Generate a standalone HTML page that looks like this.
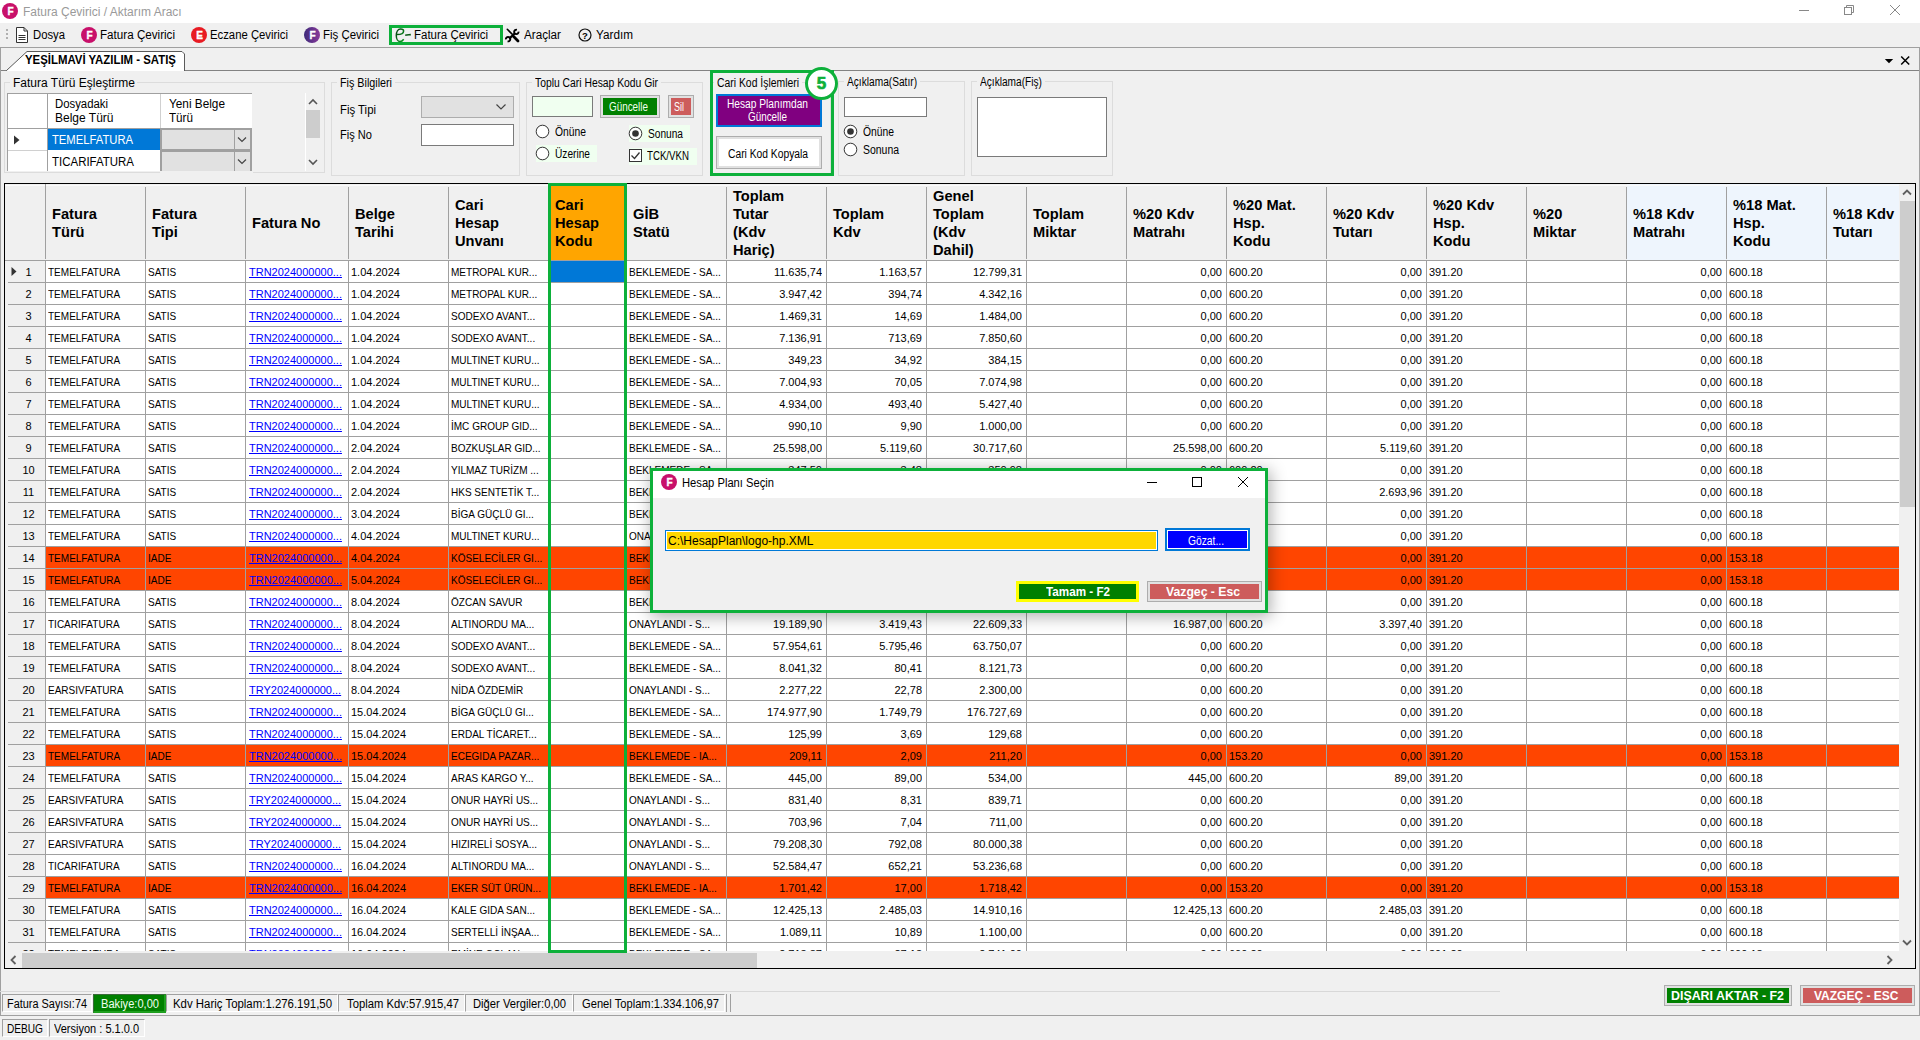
<!DOCTYPE html>
<html><head><meta charset="utf-8"><title>Fatura Çevirici</title>
<style>
*{box-sizing:border-box}
html,body{margin:0;padding:0;width:1920px;height:1040px;overflow:hidden;background:#f0f0f0;font-family:"Liberation Sans", sans-serif;font-size:12px;color:#000}
.a{position:absolute}
.t{position:absolute;white-space:nowrap;line-height:12px}
.ico{position:absolute;border-radius:50%;color:#fff;font-weight:bold;font-size:10px;text-align:center;line-height:17px;width:16px;height:16px;-webkit-text-stroke:0.35px #fff;padding-left:1px}
.grp{position:absolute;border:1px solid #dcdcdc}
.cell{position:absolute;white-space:nowrap;overflow:hidden;font-size:11px;line-height:21px;height:21px;padding-top:1px}
.hd{position:absolute;font-weight:bold;font-size:14.67px;line-height:18px;white-space:nowrap}
</style></head><body>
<div class="a" style="left:0;top:0;width:1920px;height:23px;background:#fff"></div>
<div class="ico" style="left:2px;top:3px;background:#c8106a;">F</div>
<div class="t" style="left:23px;top:6px;color:#9a9a9a;">Fatura Çevirici / Aktarım Aracı</div>
<svg class="a" style="left:1790px;top:0" width="130" height="23" viewBox="1790 0 130 23"><line x1="1799" y1="10.5" x2="1809" y2="10.5" stroke="#888" stroke-width="1"/><rect x="1844.5" y="7.5" width="7" height="7" fill="none" stroke="#888"/><path d="M1846.5 7.5V5.5H1853.5V12.5H1851.5" fill="none" stroke="#888"/><path d="M1890 5L1900 15M1900 5L1890 15" stroke="#888" stroke-width="1"/></svg>
<div class="a" style="left:0;top:23px;width:1920px;height:24px;background:#f0f0f0"></div>
<div class="a" style="left:6px;top:29px;width:2px;height:2px;background:#b0b0b0"></div>
<div class="a" style="left:6px;top:33px;width:2px;height:2px;background:#b0b0b0"></div>
<div class="a" style="left:6px;top:37px;width:2px;height:2px;background:#b0b0b0"></div>
<svg class="a" style="left:15px;top:26px" width="14" height="18" viewBox="0 0 14 18"><path d="M1.5 1.5H9L12.5 5V16.5H1.5Z" fill="#fff" stroke="#333" stroke-width="1"/><path d="M9 1.5V5H12.5" fill="none" stroke="#333"/><path d="M3.5 9.5H10.5M3.5 11.5H10.5M3.5 13.5H10.5" stroke="#333"/></svg>
<div class="t" style="left:33px;top:29px;transform:scaleX(0.941);transform-origin:0 0;">Dosya</div>
<div class="ico" style="left:81px;top:27px;background:#c8106a">F</div>
<div class="t" style="left:100px;top:29px;transform:scaleX(0.970);transform-origin:0 0;">Fatura Çevirici</div>
<div class="ico" style="left:191px;top:27px;background:#e81b23">E</div>
<div class="t" style="left:210px;top:29px;transform:scaleX(0.943);transform-origin:0 0;">Eczane Çevirici</div>
<div class="ico" style="left:304px;top:27px;background:linear-gradient(90deg,#3d2a7a,#8a3a9a)">F</div>
<div class="t" style="left:323px;top:29px;transform:scaleX(0.954);transform-origin:0 0;">Fiş Çevirici</div>
<div class="a" style="left:389px;top:25px;width:114px;height:20px;border:3px solid #0db03a"></div>
<svg class="a" style="left:390px;top:24px" width="26" height="22" viewBox="0 0 26 22"><defs><linearGradient id="eg" x1="0" y1="0" x2="1" y2="1"><stop offset="0" stop-color="#063a10"/><stop offset="1" stop-color="#0aa020"/></linearGradient></defs><path d="M7 10.6C10 10.6 13.6 9.6 13.6 7C13.6 5.2 12.2 5 10.6 5C8 5 6.3 8 6.3 11.5C6.3 15 8 17.5 10 17.5C11.5 17.5 12.8 16.6 13.7 15.3" fill="none" stroke="url(#eg)" stroke-width="1.5"/><path d="M15.2 11.2C17 10.8 19 10.8 20.8 10.6" fill="none" stroke="#0a5a14" stroke-width="1.6"/></svg>
<div class="t" style="left:414px;top:29px;transform:scaleX(0.957);transform-origin:0 0;">Fatura Çevirici</div>
<svg class="a" style="left:504px;top:27px" width="16" height="16" viewBox="0 0 16 16"><path d="M3.3 2.3L9 8" stroke="#000" stroke-width="1.6" stroke-linecap="round"/><path d="M9.6 9.6L14 14" stroke="#000" stroke-width="2.8" stroke-linecap="round"/><path d="M11 6.2L5.2 11.6" stroke="#000" stroke-width="2.2"/><path d="M14.5 4.6A2.2 2.2 0 1 1 12.9 2.8" fill="none" stroke="#000" stroke-width="1.9"/><path d="M1.9 12.4A2.2 2.2 0 1 1 3.6 14.3" fill="none" stroke="#000" stroke-width="1.9"/></svg>
<div class="t" style="left:524px;top:29px;transform:scaleX(0.973);transform-origin:0 0;">Araçlar</div>
<svg class="a" style="left:578px;top:28px" width="14" height="14" viewBox="0 0 14 14"><circle cx="7" cy="7" r="6" fill="none" stroke="#111" stroke-width="1.2"/><text x="7" y="10.5" font-size="9.5" font-weight="bold" text-anchor="middle" font-family="Liberation Sans">?</text></svg>
<div class="t" style="left:596px;top:29px;transform:scaleX(0.979);transform-origin:0 0;">Yardım</div>
<div class="a" style="left:0;top:47px;width:1920px;height:969px;border:1px solid #a0a0a0"></div>
<div class="a" style="left:1px;top:70px;width:1918px;height:1px;background:#828282"></div>
<svg class="a" style="left:0;top:48px" width="200" height="24" viewBox="0 48 200 24"><path d="M6.5 71V70.5L27 51.5H182L184.5 54V71" fill="#fff" stroke="#5a5a5a" stroke-width="1"/></svg>
<div class="t" style="left:25px;top:54px;font-weight:bold;transform:scaleX(0.950);transform-origin:0 0;">YEŞİLMAVİ YAZILIM - SATIŞ</div>
<svg class="a" style="left:1880px;top:52px" width="36" height="16" viewBox="0 0 36 16"><path d="M4.8 7H13.2L9 11.2Z" fill="#000"/><path d="M21.2 4.5L29.2 12.5M29.2 4.5L21.2 12.5" stroke="#000" stroke-width="1.5"/></svg>
<div class="grp" style="left:4px;top:82px;width:321px;height:91px"></div>
<div class="a" style="left:10px;top:81px;width:127px;height:3px;background:#f0f0f0"></div>
<div class="t" style="left:13px;top:77px;">Fatura Türü Eşleştirme</div>
<div class="a" style="left:7px;top:93px;width:245px;height:78px;background:#fff;border-left:1px solid #a0a0a0;border-top:1px solid #a0a0a0"></div>
<div class="a" style="left:47px;top:94px;width:1px;height:77px;background:#a0a0a0"></div>
<div class="a" style="left:160px;top:94px;width:1px;height:34px;background:#d0d0d0"></div>
<div class="a" style="left:8px;top:128px;width:244px;height:1px;background:#a0a0a0"></div>
<div class="a" style="left:8px;top:150px;width:39px;height:1px;background:#d0d0d0"></div>
<div class="t" style="left:55px;top:98px;transform:scaleX(0.946);transform-origin:0 0;">Dosyadaki</div>
<div class="t" style="left:55px;top:112px;">Belge Türü</div>
<div class="t" style="left:169px;top:98px;transform:scaleX(0.983);transform-origin:0 0;">Yeni Belge</div>
<div class="t" style="left:169px;top:112px;transform:scaleX(0.972);transform-origin:0 0;">Türü</div>
<svg class="a" style="left:13px;top:135px" width="8" height="10"><path d="M1 0.5L6.5 5L1 9.5Z" fill="#333"/></svg>
<div class="a" style="left:48px;top:129px;width:112px;height:21px;background:#0078d7"></div>
<div class="t" style="left:52px;top:134px;color:#fff;transform:scaleX(0.937);transform-origin:0 0;">TEMELFATURA</div>
<div class="t" style="left:52px;top:156px;transform:scaleX(0.956);transform-origin:0 0;">TICARIFATURA</div>
<div class="a" style="left:160px;top:128px;width:92px;height:23px;background:#e1e1e1;border:2px solid #a0a0a0"></div>
<div class="a" style="left:234px;top:130px;width:1px;height:19px;background:#a0a0a0"></div>
<svg class="a" style="left:236px;top:136px" width="12" height="8"><path d="M2 1.5L6 5.5L10 1.5" fill="none" stroke="#444" stroke-width="1.2"/></svg>
<div class="a" style="left:160px;top:150px;width:92px;height:23px;background:#e1e1e1;border:2px solid #a0a0a0"></div>
<div class="a" style="left:234px;top:152px;width:1px;height:19px;background:#a0a0a0"></div>
<svg class="a" style="left:236px;top:158px" width="12" height="8"><path d="M2 1.5L6 5.5L10 1.5" fill="none" stroke="#444" stroke-width="1.2"/></svg>
<div class="a" style="left:160px;top:171px;width:93px;height:2px;background:#f0f0f0"></div>
<div class="a" style="left:305px;top:93px;width:16px;height:78px;background:#f0f0f0;border-left:1px solid #fff"></div>
<svg class="a" style="left:308px;top:98px" width="10" height="8"><path d="M1 6L5 2L9 6" fill="none" stroke="#555" stroke-width="1.6"/></svg>
<div class="a" style="left:306px;top:110px;width:14px;height:28px;background:#cdcdcd"></div>
<svg class="a" style="left:308px;top:158px" width="10" height="8"><path d="M1 2L5 6L9 2" fill="none" stroke="#555" stroke-width="1.6"/></svg>
<div class="grp" style="left:331px;top:82px;width:189px;height:94px"></div>
<div class="a" style="left:337px;top:81px;width:58px;height:3px;background:#f0f0f0"></div>
<div class="t" style="left:340px;top:77px;transform:scaleX(0.896);transform-origin:0 0;">Fiş Bilgileri</div>
<div class="t" style="left:340px;top:104px;transform:scaleX(0.947);transform-origin:0 0;">Fiş Tipi</div>
<div class="t" style="left:340px;top:129px;transform:scaleX(0.923);transform-origin:0 0;">Fiş No</div>
<div class="a" style="left:421px;top:96px;width:93px;height:22px;background:#e1e1e1;border:1px solid #adadad"></div>
<svg class="a" style="left:495px;top:103px" width="12" height="8"><path d="M1.5 1.5L6 6L10.5 1.5" fill="none" stroke="#444" stroke-width="1.2"/></svg>
<div class="a" style="left:421px;top:124px;width:93px;height:22px;background:#fff;border:1px solid #7a7a7a"></div>
<div class="grp" style="left:526px;top:82px;width:177px;height:94px"></div>
<div class="a" style="left:532px;top:81px;width:129px;height:3px;background:#f0f0f0"></div>
<div class="t" style="left:535px;top:77px;transform:scaleX(0.862);transform-origin:0 0;">Toplu Cari Hesap Kodu Gir</div>
<div class="a" style="left:532px;top:96px;width:61px;height:21px;background:#f0fff0;border:1px solid #7a7a7a"></div>
<div class="a" style="left:600px;top:95px;width:60px;height:23px;background:#e1e1e1;border:1px solid #adadad"></div>
<div class="a" style="left:603px;top:98px;width:54px;height:17px;background:#008000"></div>
<div class="t" style="left:609px;top:101px;color:#f0fff0;transform:scaleX(0.823);transform-origin:0 0;">Güncelle</div>
<div class="a" style="left:668px;top:95px;width:26px;height:23px;background:#e1e1e1;border:1px solid #adadad"></div>
<div class="a" style="left:671px;top:98px;width:20px;height:17px;background:#cd5c5c"></div>
<div class="t" style="left:674px;top:101px;color:#fff;transform:scaleX(0.749);transform-origin:0 0;">Sil</div>
<div class="a" style="left:536px;top:145px;width:61px;height:17px;background:#f0fff0"></div>
<div class="a" style="left:629px;top:125px;width:61px;height:17px;background:#f0fff0"></div>
<div class="a" style="left:629px;top:148px;width:68px;height:17px;background:#f0fff0"></div>
<svg class="a" style="left:535px;top:124px" width="15" height="15" viewBox="0 0 15 15"><circle cx="7.5" cy="7.5" r="6.3" fill="#fff" stroke="#333" stroke-width="1"/></svg>
<div class="t" style="left:555px;top:126px;transform:scaleX(0.860);transform-origin:0 0;">Önüne</div>
<svg class="a" style="left:535px;top:146px" width="15" height="15" viewBox="0 0 15 15"><circle cx="7.5" cy="7.5" r="6.3" fill="#fff" stroke="#333" stroke-width="1"/></svg>
<div class="t" style="left:555px;top:148px;transform:scaleX(0.846);transform-origin:0 0;">Üzerine</div>
<svg class="a" style="left:628px;top:126px" width="15" height="15" viewBox="0 0 15 15"><circle cx="7.5" cy="7.5" r="6.3" fill="#fff" stroke="#333" stroke-width="1"/><circle cx="7.5" cy="7.5" r="3.3" fill="#333"/></svg>
<div class="t" style="left:648px;top:128px;transform:scaleX(0.846);transform-origin:0 0;">Sonuna</div>
<svg class="a" style="left:629px;top:149px" width="14" height="14"><rect x="0.5" y="0.5" width="12" height="12" fill="#fff" stroke="#333"/><path d="M2.5 6.5L5.5 9.5L10.5 3.5" fill="none" stroke="#333" stroke-width="1.3"/></svg>
<div class="t" style="left:647px;top:150px;transform:scaleX(0.807);transform-origin:0 0;">TCK/VKN</div>
<div class="grp" style="left:712px;top:82px;width:119px;height:92px"></div>
<div class="a" style="left:714px;top:81px;width:88px;height:3px;background:#f0f0f0"></div>
<div class="t" style="left:717px;top:77px;transform:scaleX(0.866);transform-origin:0 0;">Cari Kod İşlemleri</div>
<div class="a" style="left:716px;top:94px;width:106px;height:33px;border:2px solid #0078d7;background:#800080"></div>
<div class="t" style="left:727px;top:98px;color:#fff;transform:scaleX(0.849);transform-origin:0 0;">Hesap Planımdan</div>
<div class="t" style="left:748px;top:111px;color:#fff;transform:scaleX(0.823);transform-origin:0 0;">Güncelle</div>
<div class="a" style="left:716px;top:136px;width:106px;height:33px;border:1px solid #adadad;background:#fff;box-shadow:inset 0 0 0 2px #e1e1e1"></div>
<div class="t" style="left:728px;top:148px;transform:scaleX(0.857);transform-origin:0 0;">Cari Kod Kopyala</div>
<div class="a" style="left:710px;top:70px;width:124px;height:106px;border:3px solid #0db03a"></div>
<div class="a" style="left:805px;top:67px;width:33px;height:33px;border:3px solid #0db03a;border-radius:50%;background:#fff"></div>
<div class="t" style="left:805px;top:77px;width:33px;text-align:center;font-weight:bold;font-size:17px;line-height:14px;color:#0db03a;-webkit-text-stroke:0.7px #0db03a">5</div>
<div class="grp" style="left:838px;top:81px;width:127px;height:95px"></div>
<div class="a" style="left:844px;top:80px;width:76px;height:3px;background:#f0f0f0"></div>
<div class="t" style="left:847px;top:76px;transform:scaleX(0.847);transform-origin:0 0;">Açıklama(Satır)</div>
<div class="a" style="left:844px;top:97px;width:83px;height:20px;background:#fff;border:1px solid #7a7a7a"></div>
<svg class="a" style="left:843px;top:124px" width="15" height="15" viewBox="0 0 15 15"><circle cx="7.5" cy="7.5" r="6.3" fill="#fff" stroke="#333" stroke-width="1"/><circle cx="7.5" cy="7.5" r="3.3" fill="#333"/></svg>
<div class="t" style="left:863px;top:126px;transform:scaleX(0.860);transform-origin:0 0;">Önüne</div>
<svg class="a" style="left:843px;top:142px" width="15" height="15" viewBox="0 0 15 15"><circle cx="7.5" cy="7.5" r="6.3" fill="#fff" stroke="#333" stroke-width="1"/></svg>
<div class="t" style="left:863px;top:144px;transform:scaleX(0.870);transform-origin:0 0;">Sonuna</div>
<div class="grp" style="left:971px;top:81px;width:142px;height:95px"></div>
<div class="a" style="left:977px;top:80px;width:68px;height:3px;background:#f0f0f0"></div>
<div class="t" style="left:980px;top:76px;transform:scaleX(0.845);transform-origin:0 0;">Açıklama(Fiş)</div>
<div class="a" style="left:977px;top:97px;width:130px;height:60px;background:#fff;border:1px solid #7a7a7a"></div>
<div class="a" style="left:4px;top:183px;width:1912px;height:786px;border:1px solid #000;background:#f0f0f0"></div>
<div class="a" style="left:5px;top:184px;width:1894px;height:767px;overflow:hidden">
<div class="a" style="left:544px;top:0;width:77px;height:76px;background:#ffa500"></div>
<div class="a" style="left:1622px;top:0;width:99px;height:76px;background:#eef5fd"></div>
<div class="a" style="left:1722px;top:0;width:99px;height:76px;background:#eef5fd"></div>
<div class="a" style="left:1822px;top:0;width:99px;height:76px;background:#eef5fd"></div>
<div class="a" style="left:0;top:1px;width:1894px;height:1px;background:#fafafa"></div>
<div class="a" style="left:40px;top:0;width:1px;height:75px;background:#a0a0a0"></div>
<div class="a" style="left:140px;top:3px;width:1px;height:72px;background:#a0a0a0"></div>
<div class="a" style="left:240px;top:3px;width:1px;height:72px;background:#a0a0a0"></div>
<div class="a" style="left:343px;top:3px;width:1px;height:72px;background:#a0a0a0"></div>
<div class="a" style="left:443px;top:3px;width:1px;height:72px;background:#a0a0a0"></div>
<div class="a" style="left:543px;top:3px;width:1px;height:72px;background:#a0a0a0"></div>
<div class="a" style="left:621px;top:3px;width:1px;height:72px;background:#a0a0a0"></div>
<div class="a" style="left:721px;top:3px;width:1px;height:72px;background:#a0a0a0"></div>
<div class="a" style="left:821px;top:3px;width:1px;height:72px;background:#a0a0a0"></div>
<div class="a" style="left:921px;top:3px;width:1px;height:72px;background:#a0a0a0"></div>
<div class="a" style="left:1021px;top:3px;width:1px;height:72px;background:#a0a0a0"></div>
<div class="a" style="left:1121px;top:3px;width:1px;height:72px;background:#a0a0a0"></div>
<div class="a" style="left:1221px;top:3px;width:1px;height:72px;background:#a0a0a0"></div>
<div class="a" style="left:1321px;top:3px;width:1px;height:72px;background:#a0a0a0"></div>
<div class="a" style="left:1421px;top:3px;width:1px;height:72px;background:#a0a0a0"></div>
<div class="a" style="left:1521px;top:3px;width:1px;height:72px;background:#a0a0a0"></div>
<div class="a" style="left:1621px;top:3px;width:1px;height:72px;background:#a0a0a0"></div>
<div class="a" style="left:1721px;top:3px;width:1px;height:72px;background:#a0a0a0"></div>
<div class="a" style="left:1821px;top:3px;width:1px;height:72px;background:#a0a0a0"></div>
<div class="hd" style="left:47px;top:21px">Fatura<br>Türü</div>
<div class="hd" style="left:147px;top:21px">Fatura<br>Tipi</div>
<div class="hd" style="left:247px;top:30px">Fatura No</div>
<div class="hd" style="left:350px;top:21px">Belge<br>Tarihi</div>
<div class="hd" style="left:450px;top:12px">Cari<br>Hesap<br>Unvanı</div>
<div class="hd" style="left:550px;top:12px">Cari<br>Hesap<br>Kodu</div>
<div class="hd" style="left:628px;top:21px">GİB<br>Statü</div>
<div class="hd" style="left:728px;top:3px">Toplam<br>Tutar<br>(Kdv<br>Hariç)</div>
<div class="hd" style="left:828px;top:21px">Toplam<br>Kdv</div>
<div class="hd" style="left:928px;top:3px">Genel<br>Toplam<br>(Kdv<br>Dahil)</div>
<div class="hd" style="left:1028px;top:21px">Toplam<br>Miktar</div>
<div class="hd" style="left:1128px;top:21px">%20 Kdv<br>Matrahı</div>
<div class="hd" style="left:1228px;top:12px">%20 Mat.<br>Hsp.<br>Kodu</div>
<div class="hd" style="left:1328px;top:21px">%20 Kdv<br>Tutarı</div>
<div class="hd" style="left:1428px;top:12px">%20 Kdv<br>Hsp.<br>Kodu</div>
<div class="hd" style="left:1528px;top:21px">%20<br>Miktar</div>
<div class="hd" style="left:1628px;top:21px">%18 Kdv<br>Matrahı</div>
<div class="hd" style="left:1728px;top:12px">%18 Mat.<br>Hsp.<br>Kodu</div>
<div class="hd" style="left:1828px;top:21px">%18 Kdv<br>Tutarı</div>
<div class="a" style="left:0;top:76px;width:1894px;height:1px;background:#a0a0a0"></div>
<div class="a" style="left:3px;top:98px;width:37px;height:1px;background:#a0a0a0"></div>
<svg class="a" style="left:6px;top:82px" width="6" height="11"><path d="M0.5 1L5.5 5.5L0.5 10Z" fill="#333"/></svg>
<div class="cell" style="left:7px;top:77px;width:33px;text-align:center">1</div>
<div class="a" style="left:41px;top:77px;width:1853px;height:21px;background:#fff"></div>
<div class="a" style="left:544px;top:77px;width:77px;height:21px;background:#0078d7"></div>
<div class="a" style="left:41px;top:98px;width:1853px;height:1px;background:#a0a0a0"></div>
<div class="cell" style="left:43px;top:77px;width:105px;transform:scaleX(0.91);transform-origin:0 0;">TEMELFATURA</div>
<div class="cell" style="left:143px;top:77px;width:105px;transform:scaleX(0.91);transform-origin:0 0;">SATIS</div>
<div class="cell" style="left:244px;top:77px;width:99px;color:#0000ff;text-decoration:underline;">TRN2024000000...</div>
<div class="cell" style="left:346px;top:77px;width:96px;">1.04.2024</div>
<div class="cell" style="left:446px;top:77px;width:105px;transform:scaleX(0.91);transform-origin:0 0;">METROPAL KUR...</div>
<div class="cell" style="left:624px;top:77px;width:105px;transform:scaleX(0.91);transform-origin:0 0;">BEKLEMEDE - SA...</div>
<div class="cell" style="left:722px;top:77px;width:95px;text-align:right;">11.635,74</div>
<div class="cell" style="left:822px;top:77px;width:95px;text-align:right;">1.163,57</div>
<div class="cell" style="left:922px;top:77px;width:95px;text-align:right;">12.799,31</div>
<div class="cell" style="left:1122px;top:77px;width:95px;text-align:right;">0,00</div>
<div class="cell" style="left:1224px;top:77px;width:96px;">600.20</div>
<div class="cell" style="left:1322px;top:77px;width:95px;text-align:right;">0,00</div>
<div class="cell" style="left:1424px;top:77px;width:96px;">391.20</div>
<div class="cell" style="left:1622px;top:77px;width:95px;text-align:right;">0,00</div>
<div class="cell" style="left:1724px;top:77px;width:96px;">600.18</div>
<div class="a" style="left:3px;top:120px;width:37px;height:1px;background:#a0a0a0"></div>
<div class="cell" style="left:7px;top:99px;width:33px;text-align:center">2</div>
<div class="a" style="left:41px;top:99px;width:1853px;height:21px;background:#fff"></div>
<div class="a" style="left:41px;top:120px;width:1853px;height:1px;background:#a0a0a0"></div>
<div class="cell" style="left:43px;top:99px;width:105px;transform:scaleX(0.91);transform-origin:0 0;">TEMELFATURA</div>
<div class="cell" style="left:143px;top:99px;width:105px;transform:scaleX(0.91);transform-origin:0 0;">SATIS</div>
<div class="cell" style="left:244px;top:99px;width:99px;color:#0000ff;text-decoration:underline;">TRN2024000000...</div>
<div class="cell" style="left:346px;top:99px;width:96px;">1.04.2024</div>
<div class="cell" style="left:446px;top:99px;width:105px;transform:scaleX(0.91);transform-origin:0 0;">METROPAL KUR...</div>
<div class="cell" style="left:624px;top:99px;width:105px;transform:scaleX(0.91);transform-origin:0 0;">BEKLEMEDE - SA...</div>
<div class="cell" style="left:722px;top:99px;width:95px;text-align:right;">3.947,42</div>
<div class="cell" style="left:822px;top:99px;width:95px;text-align:right;">394,74</div>
<div class="cell" style="left:922px;top:99px;width:95px;text-align:right;">4.342,16</div>
<div class="cell" style="left:1122px;top:99px;width:95px;text-align:right;">0,00</div>
<div class="cell" style="left:1224px;top:99px;width:96px;">600.20</div>
<div class="cell" style="left:1322px;top:99px;width:95px;text-align:right;">0,00</div>
<div class="cell" style="left:1424px;top:99px;width:96px;">391.20</div>
<div class="cell" style="left:1622px;top:99px;width:95px;text-align:right;">0,00</div>
<div class="cell" style="left:1724px;top:99px;width:96px;">600.18</div>
<div class="a" style="left:3px;top:142px;width:37px;height:1px;background:#a0a0a0"></div>
<div class="cell" style="left:7px;top:121px;width:33px;text-align:center">3</div>
<div class="a" style="left:41px;top:121px;width:1853px;height:21px;background:#fff"></div>
<div class="a" style="left:41px;top:142px;width:1853px;height:1px;background:#a0a0a0"></div>
<div class="cell" style="left:43px;top:121px;width:105px;transform:scaleX(0.91);transform-origin:0 0;">TEMELFATURA</div>
<div class="cell" style="left:143px;top:121px;width:105px;transform:scaleX(0.91);transform-origin:0 0;">SATIS</div>
<div class="cell" style="left:244px;top:121px;width:99px;color:#0000ff;text-decoration:underline;">TRN2024000000...</div>
<div class="cell" style="left:346px;top:121px;width:96px;">1.04.2024</div>
<div class="cell" style="left:446px;top:121px;width:105px;transform:scaleX(0.91);transform-origin:0 0;">SODEXO AVANT...</div>
<div class="cell" style="left:624px;top:121px;width:105px;transform:scaleX(0.91);transform-origin:0 0;">BEKLEMEDE - SA...</div>
<div class="cell" style="left:722px;top:121px;width:95px;text-align:right;">1.469,31</div>
<div class="cell" style="left:822px;top:121px;width:95px;text-align:right;">14,69</div>
<div class="cell" style="left:922px;top:121px;width:95px;text-align:right;">1.484,00</div>
<div class="cell" style="left:1122px;top:121px;width:95px;text-align:right;">0,00</div>
<div class="cell" style="left:1224px;top:121px;width:96px;">600.20</div>
<div class="cell" style="left:1322px;top:121px;width:95px;text-align:right;">0,00</div>
<div class="cell" style="left:1424px;top:121px;width:96px;">391.20</div>
<div class="cell" style="left:1622px;top:121px;width:95px;text-align:right;">0,00</div>
<div class="cell" style="left:1724px;top:121px;width:96px;">600.18</div>
<div class="a" style="left:3px;top:164px;width:37px;height:1px;background:#a0a0a0"></div>
<div class="cell" style="left:7px;top:143px;width:33px;text-align:center">4</div>
<div class="a" style="left:41px;top:143px;width:1853px;height:21px;background:#fff"></div>
<div class="a" style="left:41px;top:164px;width:1853px;height:1px;background:#a0a0a0"></div>
<div class="cell" style="left:43px;top:143px;width:105px;transform:scaleX(0.91);transform-origin:0 0;">TEMELFATURA</div>
<div class="cell" style="left:143px;top:143px;width:105px;transform:scaleX(0.91);transform-origin:0 0;">SATIS</div>
<div class="cell" style="left:244px;top:143px;width:99px;color:#0000ff;text-decoration:underline;">TRN2024000000...</div>
<div class="cell" style="left:346px;top:143px;width:96px;">1.04.2024</div>
<div class="cell" style="left:446px;top:143px;width:105px;transform:scaleX(0.91);transform-origin:0 0;">SODEXO AVANT...</div>
<div class="cell" style="left:624px;top:143px;width:105px;transform:scaleX(0.91);transform-origin:0 0;">BEKLEMEDE - SA...</div>
<div class="cell" style="left:722px;top:143px;width:95px;text-align:right;">7.136,91</div>
<div class="cell" style="left:822px;top:143px;width:95px;text-align:right;">713,69</div>
<div class="cell" style="left:922px;top:143px;width:95px;text-align:right;">7.850,60</div>
<div class="cell" style="left:1122px;top:143px;width:95px;text-align:right;">0,00</div>
<div class="cell" style="left:1224px;top:143px;width:96px;">600.20</div>
<div class="cell" style="left:1322px;top:143px;width:95px;text-align:right;">0,00</div>
<div class="cell" style="left:1424px;top:143px;width:96px;">391.20</div>
<div class="cell" style="left:1622px;top:143px;width:95px;text-align:right;">0,00</div>
<div class="cell" style="left:1724px;top:143px;width:96px;">600.18</div>
<div class="a" style="left:3px;top:186px;width:37px;height:1px;background:#a0a0a0"></div>
<div class="cell" style="left:7px;top:165px;width:33px;text-align:center">5</div>
<div class="a" style="left:41px;top:165px;width:1853px;height:21px;background:#fff"></div>
<div class="a" style="left:41px;top:186px;width:1853px;height:1px;background:#a0a0a0"></div>
<div class="cell" style="left:43px;top:165px;width:105px;transform:scaleX(0.91);transform-origin:0 0;">TEMELFATURA</div>
<div class="cell" style="left:143px;top:165px;width:105px;transform:scaleX(0.91);transform-origin:0 0;">SATIS</div>
<div class="cell" style="left:244px;top:165px;width:99px;color:#0000ff;text-decoration:underline;">TRN2024000000...</div>
<div class="cell" style="left:346px;top:165px;width:96px;">1.04.2024</div>
<div class="cell" style="left:446px;top:165px;width:105px;transform:scaleX(0.91);transform-origin:0 0;">MULTINET KURU...</div>
<div class="cell" style="left:624px;top:165px;width:105px;transform:scaleX(0.91);transform-origin:0 0;">BEKLEMEDE - SA...</div>
<div class="cell" style="left:722px;top:165px;width:95px;text-align:right;">349,23</div>
<div class="cell" style="left:822px;top:165px;width:95px;text-align:right;">34,92</div>
<div class="cell" style="left:922px;top:165px;width:95px;text-align:right;">384,15</div>
<div class="cell" style="left:1122px;top:165px;width:95px;text-align:right;">0,00</div>
<div class="cell" style="left:1224px;top:165px;width:96px;">600.20</div>
<div class="cell" style="left:1322px;top:165px;width:95px;text-align:right;">0,00</div>
<div class="cell" style="left:1424px;top:165px;width:96px;">391.20</div>
<div class="cell" style="left:1622px;top:165px;width:95px;text-align:right;">0,00</div>
<div class="cell" style="left:1724px;top:165px;width:96px;">600.18</div>
<div class="a" style="left:3px;top:208px;width:37px;height:1px;background:#a0a0a0"></div>
<div class="cell" style="left:7px;top:187px;width:33px;text-align:center">6</div>
<div class="a" style="left:41px;top:187px;width:1853px;height:21px;background:#fff"></div>
<div class="a" style="left:41px;top:208px;width:1853px;height:1px;background:#a0a0a0"></div>
<div class="cell" style="left:43px;top:187px;width:105px;transform:scaleX(0.91);transform-origin:0 0;">TEMELFATURA</div>
<div class="cell" style="left:143px;top:187px;width:105px;transform:scaleX(0.91);transform-origin:0 0;">SATIS</div>
<div class="cell" style="left:244px;top:187px;width:99px;color:#0000ff;text-decoration:underline;">TRN2024000000...</div>
<div class="cell" style="left:346px;top:187px;width:96px;">1.04.2024</div>
<div class="cell" style="left:446px;top:187px;width:105px;transform:scaleX(0.91);transform-origin:0 0;">MULTINET KURU...</div>
<div class="cell" style="left:624px;top:187px;width:105px;transform:scaleX(0.91);transform-origin:0 0;">BEKLEMEDE - SA...</div>
<div class="cell" style="left:722px;top:187px;width:95px;text-align:right;">7.004,93</div>
<div class="cell" style="left:822px;top:187px;width:95px;text-align:right;">70,05</div>
<div class="cell" style="left:922px;top:187px;width:95px;text-align:right;">7.074,98</div>
<div class="cell" style="left:1122px;top:187px;width:95px;text-align:right;">0,00</div>
<div class="cell" style="left:1224px;top:187px;width:96px;">600.20</div>
<div class="cell" style="left:1322px;top:187px;width:95px;text-align:right;">0,00</div>
<div class="cell" style="left:1424px;top:187px;width:96px;">391.20</div>
<div class="cell" style="left:1622px;top:187px;width:95px;text-align:right;">0,00</div>
<div class="cell" style="left:1724px;top:187px;width:96px;">600.18</div>
<div class="a" style="left:3px;top:230px;width:37px;height:1px;background:#a0a0a0"></div>
<div class="cell" style="left:7px;top:209px;width:33px;text-align:center">7</div>
<div class="a" style="left:41px;top:209px;width:1853px;height:21px;background:#fff"></div>
<div class="a" style="left:41px;top:230px;width:1853px;height:1px;background:#a0a0a0"></div>
<div class="cell" style="left:43px;top:209px;width:105px;transform:scaleX(0.91);transform-origin:0 0;">TEMELFATURA</div>
<div class="cell" style="left:143px;top:209px;width:105px;transform:scaleX(0.91);transform-origin:0 0;">SATIS</div>
<div class="cell" style="left:244px;top:209px;width:99px;color:#0000ff;text-decoration:underline;">TRN2024000000...</div>
<div class="cell" style="left:346px;top:209px;width:96px;">1.04.2024</div>
<div class="cell" style="left:446px;top:209px;width:105px;transform:scaleX(0.91);transform-origin:0 0;">MULTINET KURU...</div>
<div class="cell" style="left:624px;top:209px;width:105px;transform:scaleX(0.91);transform-origin:0 0;">BEKLEMEDE - SA...</div>
<div class="cell" style="left:722px;top:209px;width:95px;text-align:right;">4.934,00</div>
<div class="cell" style="left:822px;top:209px;width:95px;text-align:right;">493,40</div>
<div class="cell" style="left:922px;top:209px;width:95px;text-align:right;">5.427,40</div>
<div class="cell" style="left:1122px;top:209px;width:95px;text-align:right;">0,00</div>
<div class="cell" style="left:1224px;top:209px;width:96px;">600.20</div>
<div class="cell" style="left:1322px;top:209px;width:95px;text-align:right;">0,00</div>
<div class="cell" style="left:1424px;top:209px;width:96px;">391.20</div>
<div class="cell" style="left:1622px;top:209px;width:95px;text-align:right;">0,00</div>
<div class="cell" style="left:1724px;top:209px;width:96px;">600.18</div>
<div class="a" style="left:3px;top:252px;width:37px;height:1px;background:#a0a0a0"></div>
<div class="cell" style="left:7px;top:231px;width:33px;text-align:center">8</div>
<div class="a" style="left:41px;top:231px;width:1853px;height:21px;background:#fff"></div>
<div class="a" style="left:41px;top:252px;width:1853px;height:1px;background:#a0a0a0"></div>
<div class="cell" style="left:43px;top:231px;width:105px;transform:scaleX(0.91);transform-origin:0 0;">TEMELFATURA</div>
<div class="cell" style="left:143px;top:231px;width:105px;transform:scaleX(0.91);transform-origin:0 0;">SATIS</div>
<div class="cell" style="left:244px;top:231px;width:99px;color:#0000ff;text-decoration:underline;">TRN2024000000...</div>
<div class="cell" style="left:346px;top:231px;width:96px;">1.04.2024</div>
<div class="cell" style="left:446px;top:231px;width:105px;transform:scaleX(0.91);transform-origin:0 0;">İMC GROUP GID...</div>
<div class="cell" style="left:624px;top:231px;width:105px;transform:scaleX(0.91);transform-origin:0 0;">BEKLEMEDE - SA...</div>
<div class="cell" style="left:722px;top:231px;width:95px;text-align:right;">990,10</div>
<div class="cell" style="left:822px;top:231px;width:95px;text-align:right;">9,90</div>
<div class="cell" style="left:922px;top:231px;width:95px;text-align:right;">1.000,00</div>
<div class="cell" style="left:1122px;top:231px;width:95px;text-align:right;">0,00</div>
<div class="cell" style="left:1224px;top:231px;width:96px;">600.20</div>
<div class="cell" style="left:1322px;top:231px;width:95px;text-align:right;">0,00</div>
<div class="cell" style="left:1424px;top:231px;width:96px;">391.20</div>
<div class="cell" style="left:1622px;top:231px;width:95px;text-align:right;">0,00</div>
<div class="cell" style="left:1724px;top:231px;width:96px;">600.18</div>
<div class="a" style="left:3px;top:274px;width:37px;height:1px;background:#a0a0a0"></div>
<div class="cell" style="left:7px;top:253px;width:33px;text-align:center">9</div>
<div class="a" style="left:41px;top:253px;width:1853px;height:21px;background:#fff"></div>
<div class="a" style="left:41px;top:274px;width:1853px;height:1px;background:#a0a0a0"></div>
<div class="cell" style="left:43px;top:253px;width:105px;transform:scaleX(0.91);transform-origin:0 0;">TEMELFATURA</div>
<div class="cell" style="left:143px;top:253px;width:105px;transform:scaleX(0.91);transform-origin:0 0;">SATIS</div>
<div class="cell" style="left:244px;top:253px;width:99px;color:#0000ff;text-decoration:underline;">TRN2024000000...</div>
<div class="cell" style="left:346px;top:253px;width:96px;">2.04.2024</div>
<div class="cell" style="left:446px;top:253px;width:105px;transform:scaleX(0.91);transform-origin:0 0;">BOZKUŞLAR GID...</div>
<div class="cell" style="left:624px;top:253px;width:105px;transform:scaleX(0.91);transform-origin:0 0;">BEKLEMEDE - SA...</div>
<div class="cell" style="left:722px;top:253px;width:95px;text-align:right;">25.598,00</div>
<div class="cell" style="left:822px;top:253px;width:95px;text-align:right;">5.119,60</div>
<div class="cell" style="left:922px;top:253px;width:95px;text-align:right;">30.717,60</div>
<div class="cell" style="left:1122px;top:253px;width:95px;text-align:right;">25.598,00</div>
<div class="cell" style="left:1224px;top:253px;width:96px;">600.20</div>
<div class="cell" style="left:1322px;top:253px;width:95px;text-align:right;">5.119,60</div>
<div class="cell" style="left:1424px;top:253px;width:96px;">391.20</div>
<div class="cell" style="left:1622px;top:253px;width:95px;text-align:right;">0,00</div>
<div class="cell" style="left:1724px;top:253px;width:96px;">600.18</div>
<div class="a" style="left:3px;top:296px;width:37px;height:1px;background:#a0a0a0"></div>
<div class="cell" style="left:7px;top:275px;width:33px;text-align:center">10</div>
<div class="a" style="left:41px;top:275px;width:1853px;height:21px;background:#fff"></div>
<div class="a" style="left:41px;top:296px;width:1853px;height:1px;background:#a0a0a0"></div>
<div class="cell" style="left:43px;top:275px;width:105px;transform:scaleX(0.91);transform-origin:0 0;">TEMELFATURA</div>
<div class="cell" style="left:143px;top:275px;width:105px;transform:scaleX(0.91);transform-origin:0 0;">SATIS</div>
<div class="cell" style="left:244px;top:275px;width:99px;color:#0000ff;text-decoration:underline;">TRN2024000000...</div>
<div class="cell" style="left:346px;top:275px;width:96px;">2.04.2024</div>
<div class="cell" style="left:446px;top:275px;width:105px;transform:scaleX(0.91);transform-origin:0 0;">YILMAZ TURİZM ...</div>
<div class="cell" style="left:624px;top:275px;width:105px;transform:scaleX(0.91);transform-origin:0 0;">BEKLEMEDE - SA...</div>
<div class="cell" style="left:722px;top:275px;width:95px;text-align:right;">347,50</div>
<div class="cell" style="left:822px;top:275px;width:95px;text-align:right;">3,48</div>
<div class="cell" style="left:922px;top:275px;width:95px;text-align:right;">350,98</div>
<div class="cell" style="left:1122px;top:275px;width:95px;text-align:right;">0,00</div>
<div class="cell" style="left:1224px;top:275px;width:96px;">600.20</div>
<div class="cell" style="left:1322px;top:275px;width:95px;text-align:right;">0,00</div>
<div class="cell" style="left:1424px;top:275px;width:96px;">391.20</div>
<div class="cell" style="left:1622px;top:275px;width:95px;text-align:right;">0,00</div>
<div class="cell" style="left:1724px;top:275px;width:96px;">600.18</div>
<div class="a" style="left:3px;top:318px;width:37px;height:1px;background:#a0a0a0"></div>
<div class="cell" style="left:7px;top:297px;width:33px;text-align:center">11</div>
<div class="a" style="left:41px;top:297px;width:1853px;height:21px;background:#fff"></div>
<div class="a" style="left:41px;top:318px;width:1853px;height:1px;background:#a0a0a0"></div>
<div class="cell" style="left:43px;top:297px;width:105px;transform:scaleX(0.91);transform-origin:0 0;">TEMELFATURA</div>
<div class="cell" style="left:143px;top:297px;width:105px;transform:scaleX(0.91);transform-origin:0 0;">SATIS</div>
<div class="cell" style="left:244px;top:297px;width:99px;color:#0000ff;text-decoration:underline;">TRN2024000000...</div>
<div class="cell" style="left:346px;top:297px;width:96px;">2.04.2024</div>
<div class="cell" style="left:446px;top:297px;width:105px;transform:scaleX(0.91);transform-origin:0 0;">HKS SENTETİK T...</div>
<div class="cell" style="left:624px;top:297px;width:105px;transform:scaleX(0.91);transform-origin:0 0;">BEKLEMEDE - SA...</div>
<div class="cell" style="left:722px;top:297px;width:95px;text-align:right;">13.469,80</div>
<div class="cell" style="left:822px;top:297px;width:95px;text-align:right;">2.693,96</div>
<div class="cell" style="left:922px;top:297px;width:95px;text-align:right;">16.163,76</div>
<div class="cell" style="left:1122px;top:297px;width:95px;text-align:right;">13.469,80</div>
<div class="cell" style="left:1224px;top:297px;width:96px;">600.20</div>
<div class="cell" style="left:1322px;top:297px;width:95px;text-align:right;">2.693,96</div>
<div class="cell" style="left:1424px;top:297px;width:96px;">391.20</div>
<div class="cell" style="left:1622px;top:297px;width:95px;text-align:right;">0,00</div>
<div class="cell" style="left:1724px;top:297px;width:96px;">600.18</div>
<div class="a" style="left:3px;top:340px;width:37px;height:1px;background:#a0a0a0"></div>
<div class="cell" style="left:7px;top:319px;width:33px;text-align:center">12</div>
<div class="a" style="left:41px;top:319px;width:1853px;height:21px;background:#fff"></div>
<div class="a" style="left:41px;top:340px;width:1853px;height:1px;background:#a0a0a0"></div>
<div class="cell" style="left:43px;top:319px;width:105px;transform:scaleX(0.91);transform-origin:0 0;">TEMELFATURA</div>
<div class="cell" style="left:143px;top:319px;width:105px;transform:scaleX(0.91);transform-origin:0 0;">SATIS</div>
<div class="cell" style="left:244px;top:319px;width:99px;color:#0000ff;text-decoration:underline;">TRN2024000000...</div>
<div class="cell" style="left:346px;top:319px;width:96px;">3.04.2024</div>
<div class="cell" style="left:446px;top:319px;width:105px;transform:scaleX(0.91);transform-origin:0 0;">BİGA GÜÇLÜ GI...</div>
<div class="cell" style="left:624px;top:319px;width:105px;transform:scaleX(0.91);transform-origin:0 0;">BEKLEMEDE - SA...</div>
<div class="cell" style="left:722px;top:319px;width:95px;text-align:right;">1.000,00</div>
<div class="cell" style="left:822px;top:319px;width:95px;text-align:right;">10,00</div>
<div class="cell" style="left:922px;top:319px;width:95px;text-align:right;">1.010,00</div>
<div class="cell" style="left:1122px;top:319px;width:95px;text-align:right;">0,00</div>
<div class="cell" style="left:1224px;top:319px;width:96px;">600.20</div>
<div class="cell" style="left:1322px;top:319px;width:95px;text-align:right;">0,00</div>
<div class="cell" style="left:1424px;top:319px;width:96px;">391.20</div>
<div class="cell" style="left:1622px;top:319px;width:95px;text-align:right;">0,00</div>
<div class="cell" style="left:1724px;top:319px;width:96px;">600.18</div>
<div class="a" style="left:3px;top:362px;width:37px;height:1px;background:#a0a0a0"></div>
<div class="cell" style="left:7px;top:341px;width:33px;text-align:center">13</div>
<div class="a" style="left:41px;top:341px;width:1853px;height:21px;background:#fff"></div>
<div class="a" style="left:41px;top:362px;width:1853px;height:1px;background:#a0a0a0"></div>
<div class="cell" style="left:43px;top:341px;width:105px;transform:scaleX(0.91);transform-origin:0 0;">TEMELFATURA</div>
<div class="cell" style="left:143px;top:341px;width:105px;transform:scaleX(0.91);transform-origin:0 0;">SATIS</div>
<div class="cell" style="left:244px;top:341px;width:99px;color:#0000ff;text-decoration:underline;">TRN2024000000...</div>
<div class="cell" style="left:346px;top:341px;width:96px;">4.04.2024</div>
<div class="cell" style="left:446px;top:341px;width:105px;transform:scaleX(0.91);transform-origin:0 0;">MULTINET KURU...</div>
<div class="cell" style="left:624px;top:341px;width:105px;transform:scaleX(0.91);transform-origin:0 0;">ONAYLANDI - S...</div>
<div class="cell" style="left:722px;top:341px;width:95px;text-align:right;">2.500,00</div>
<div class="cell" style="left:822px;top:341px;width:95px;text-align:right;">25,00</div>
<div class="cell" style="left:922px;top:341px;width:95px;text-align:right;">2.525,00</div>
<div class="cell" style="left:1122px;top:341px;width:95px;text-align:right;">0,00</div>
<div class="cell" style="left:1224px;top:341px;width:96px;">600.20</div>
<div class="cell" style="left:1322px;top:341px;width:95px;text-align:right;">0,00</div>
<div class="cell" style="left:1424px;top:341px;width:96px;">391.20</div>
<div class="cell" style="left:1622px;top:341px;width:95px;text-align:right;">0,00</div>
<div class="cell" style="left:1724px;top:341px;width:96px;">600.18</div>
<div class="a" style="left:3px;top:384px;width:37px;height:1px;background:#a0a0a0"></div>
<div class="cell" style="left:7px;top:363px;width:33px;text-align:center">14</div>
<div class="a" style="left:41px;top:363px;width:1853px;height:21px;background:#ff4500"></div>
<div class="a" style="left:41px;top:384px;width:1853px;height:1px;background:#a0a0a0"></div>
<div class="cell" style="left:43px;top:363px;width:105px;transform:scaleX(0.91);transform-origin:0 0;">TEMELFATURA</div>
<div class="cell" style="left:143px;top:363px;width:105px;transform:scaleX(0.91);transform-origin:0 0;">IADE</div>
<div class="cell" style="left:244px;top:363px;width:99px;color:#0000ff;text-decoration:underline;">TRN2024000000...</div>
<div class="cell" style="left:346px;top:363px;width:96px;">4.04.2024</div>
<div class="cell" style="left:446px;top:363px;width:105px;transform:scaleX(0.91);transform-origin:0 0;">KÖSELECİLER GI...</div>
<div class="cell" style="left:624px;top:363px;width:105px;transform:scaleX(0.91);transform-origin:0 0;">BEKLEMEDE - IA...</div>
<div class="cell" style="left:722px;top:363px;width:95px;text-align:right;">1.200,00</div>
<div class="cell" style="left:822px;top:363px;width:95px;text-align:right;">12,00</div>
<div class="cell" style="left:922px;top:363px;width:95px;text-align:right;">1.212,00</div>
<div class="cell" style="left:1122px;top:363px;width:95px;text-align:right;">0,00</div>
<div class="cell" style="left:1224px;top:363px;width:96px;">153.20</div>
<div class="cell" style="left:1322px;top:363px;width:95px;text-align:right;">0,00</div>
<div class="cell" style="left:1424px;top:363px;width:96px;">391.20</div>
<div class="cell" style="left:1622px;top:363px;width:95px;text-align:right;">0,00</div>
<div class="cell" style="left:1724px;top:363px;width:96px;">153.18</div>
<div class="a" style="left:3px;top:406px;width:37px;height:1px;background:#a0a0a0"></div>
<div class="cell" style="left:7px;top:385px;width:33px;text-align:center">15</div>
<div class="a" style="left:41px;top:385px;width:1853px;height:21px;background:#ff4500"></div>
<div class="a" style="left:41px;top:406px;width:1853px;height:1px;background:#a0a0a0"></div>
<div class="cell" style="left:43px;top:385px;width:105px;transform:scaleX(0.91);transform-origin:0 0;">TEMELFATURA</div>
<div class="cell" style="left:143px;top:385px;width:105px;transform:scaleX(0.91);transform-origin:0 0;">IADE</div>
<div class="cell" style="left:244px;top:385px;width:99px;color:#0000ff;text-decoration:underline;">TRN2024000000...</div>
<div class="cell" style="left:346px;top:385px;width:96px;">5.04.2024</div>
<div class="cell" style="left:446px;top:385px;width:105px;transform:scaleX(0.91);transform-origin:0 0;">KÖSELECİLER GI...</div>
<div class="cell" style="left:624px;top:385px;width:105px;transform:scaleX(0.91);transform-origin:0 0;">BEKLEMEDE - IA...</div>
<div class="cell" style="left:722px;top:385px;width:95px;text-align:right;">800,00</div>
<div class="cell" style="left:822px;top:385px;width:95px;text-align:right;">8,00</div>
<div class="cell" style="left:922px;top:385px;width:95px;text-align:right;">808,00</div>
<div class="cell" style="left:1122px;top:385px;width:95px;text-align:right;">0,00</div>
<div class="cell" style="left:1224px;top:385px;width:96px;">153.20</div>
<div class="cell" style="left:1322px;top:385px;width:95px;text-align:right;">0,00</div>
<div class="cell" style="left:1424px;top:385px;width:96px;">391.20</div>
<div class="cell" style="left:1622px;top:385px;width:95px;text-align:right;">0,00</div>
<div class="cell" style="left:1724px;top:385px;width:96px;">153.18</div>
<div class="a" style="left:3px;top:428px;width:37px;height:1px;background:#a0a0a0"></div>
<div class="cell" style="left:7px;top:407px;width:33px;text-align:center">16</div>
<div class="a" style="left:41px;top:407px;width:1853px;height:21px;background:#fff"></div>
<div class="a" style="left:41px;top:428px;width:1853px;height:1px;background:#a0a0a0"></div>
<div class="cell" style="left:43px;top:407px;width:105px;transform:scaleX(0.91);transform-origin:0 0;">TEMELFATURA</div>
<div class="cell" style="left:143px;top:407px;width:105px;transform:scaleX(0.91);transform-origin:0 0;">SATIS</div>
<div class="cell" style="left:244px;top:407px;width:99px;color:#0000ff;text-decoration:underline;">TRN2024000000...</div>
<div class="cell" style="left:346px;top:407px;width:96px;">8.04.2024</div>
<div class="cell" style="left:446px;top:407px;width:105px;transform:scaleX(0.91);transform-origin:0 0;">ÖZCAN SAVUR</div>
<div class="cell" style="left:624px;top:407px;width:105px;transform:scaleX(0.91);transform-origin:0 0;">BEKLEMEDE - SA...</div>
<div class="cell" style="left:722px;top:407px;width:95px;text-align:right;">450,00</div>
<div class="cell" style="left:822px;top:407px;width:95px;text-align:right;">4,50</div>
<div class="cell" style="left:922px;top:407px;width:95px;text-align:right;">454,50</div>
<div class="cell" style="left:1122px;top:407px;width:95px;text-align:right;">0,00</div>
<div class="cell" style="left:1224px;top:407px;width:96px;">600.20</div>
<div class="cell" style="left:1322px;top:407px;width:95px;text-align:right;">0,00</div>
<div class="cell" style="left:1424px;top:407px;width:96px;">391.20</div>
<div class="cell" style="left:1622px;top:407px;width:95px;text-align:right;">0,00</div>
<div class="cell" style="left:1724px;top:407px;width:96px;">600.18</div>
<div class="a" style="left:3px;top:450px;width:37px;height:1px;background:#a0a0a0"></div>
<div class="cell" style="left:7px;top:429px;width:33px;text-align:center">17</div>
<div class="a" style="left:41px;top:429px;width:1853px;height:21px;background:#fff"></div>
<div class="a" style="left:41px;top:450px;width:1853px;height:1px;background:#a0a0a0"></div>
<div class="cell" style="left:43px;top:429px;width:105px;transform:scaleX(0.91);transform-origin:0 0;">TICARIFATURA</div>
<div class="cell" style="left:143px;top:429px;width:105px;transform:scaleX(0.91);transform-origin:0 0;">SATIS</div>
<div class="cell" style="left:244px;top:429px;width:99px;color:#0000ff;text-decoration:underline;">TRN2024000000...</div>
<div class="cell" style="left:346px;top:429px;width:96px;">8.04.2024</div>
<div class="cell" style="left:446px;top:429px;width:105px;transform:scaleX(0.91);transform-origin:0 0;">ALTINORDU MA...</div>
<div class="cell" style="left:624px;top:429px;width:105px;transform:scaleX(0.91);transform-origin:0 0;">ONAYLANDI - S...</div>
<div class="cell" style="left:722px;top:429px;width:95px;text-align:right;">19.189,90</div>
<div class="cell" style="left:822px;top:429px;width:95px;text-align:right;">3.419,43</div>
<div class="cell" style="left:922px;top:429px;width:95px;text-align:right;">22.609,33</div>
<div class="cell" style="left:1122px;top:429px;width:95px;text-align:right;">16.987,00</div>
<div class="cell" style="left:1224px;top:429px;width:96px;">600.20</div>
<div class="cell" style="left:1322px;top:429px;width:95px;text-align:right;">3.397,40</div>
<div class="cell" style="left:1424px;top:429px;width:96px;">391.20</div>
<div class="cell" style="left:1622px;top:429px;width:95px;text-align:right;">0,00</div>
<div class="cell" style="left:1724px;top:429px;width:96px;">600.18</div>
<div class="a" style="left:3px;top:472px;width:37px;height:1px;background:#a0a0a0"></div>
<div class="cell" style="left:7px;top:451px;width:33px;text-align:center">18</div>
<div class="a" style="left:41px;top:451px;width:1853px;height:21px;background:#fff"></div>
<div class="a" style="left:41px;top:472px;width:1853px;height:1px;background:#a0a0a0"></div>
<div class="cell" style="left:43px;top:451px;width:105px;transform:scaleX(0.91);transform-origin:0 0;">TEMELFATURA</div>
<div class="cell" style="left:143px;top:451px;width:105px;transform:scaleX(0.91);transform-origin:0 0;">SATIS</div>
<div class="cell" style="left:244px;top:451px;width:99px;color:#0000ff;text-decoration:underline;">TRN2024000000...</div>
<div class="cell" style="left:346px;top:451px;width:96px;">8.04.2024</div>
<div class="cell" style="left:446px;top:451px;width:105px;transform:scaleX(0.91);transform-origin:0 0;">SODEXO AVANT...</div>
<div class="cell" style="left:624px;top:451px;width:105px;transform:scaleX(0.91);transform-origin:0 0;">BEKLEMEDE - SA...</div>
<div class="cell" style="left:722px;top:451px;width:95px;text-align:right;">57.954,61</div>
<div class="cell" style="left:822px;top:451px;width:95px;text-align:right;">5.795,46</div>
<div class="cell" style="left:922px;top:451px;width:95px;text-align:right;">63.750,07</div>
<div class="cell" style="left:1122px;top:451px;width:95px;text-align:right;">0,00</div>
<div class="cell" style="left:1224px;top:451px;width:96px;">600.20</div>
<div class="cell" style="left:1322px;top:451px;width:95px;text-align:right;">0,00</div>
<div class="cell" style="left:1424px;top:451px;width:96px;">391.20</div>
<div class="cell" style="left:1622px;top:451px;width:95px;text-align:right;">0,00</div>
<div class="cell" style="left:1724px;top:451px;width:96px;">600.18</div>
<div class="a" style="left:3px;top:494px;width:37px;height:1px;background:#a0a0a0"></div>
<div class="cell" style="left:7px;top:473px;width:33px;text-align:center">19</div>
<div class="a" style="left:41px;top:473px;width:1853px;height:21px;background:#fff"></div>
<div class="a" style="left:41px;top:494px;width:1853px;height:1px;background:#a0a0a0"></div>
<div class="cell" style="left:43px;top:473px;width:105px;transform:scaleX(0.91);transform-origin:0 0;">TEMELFATURA</div>
<div class="cell" style="left:143px;top:473px;width:105px;transform:scaleX(0.91);transform-origin:0 0;">SATIS</div>
<div class="cell" style="left:244px;top:473px;width:99px;color:#0000ff;text-decoration:underline;">TRN2024000000...</div>
<div class="cell" style="left:346px;top:473px;width:96px;">8.04.2024</div>
<div class="cell" style="left:446px;top:473px;width:105px;transform:scaleX(0.91);transform-origin:0 0;">SODEXO AVANT...</div>
<div class="cell" style="left:624px;top:473px;width:105px;transform:scaleX(0.91);transform-origin:0 0;">BEKLEMEDE - SA...</div>
<div class="cell" style="left:722px;top:473px;width:95px;text-align:right;">8.041,32</div>
<div class="cell" style="left:822px;top:473px;width:95px;text-align:right;">80,41</div>
<div class="cell" style="left:922px;top:473px;width:95px;text-align:right;">8.121,73</div>
<div class="cell" style="left:1122px;top:473px;width:95px;text-align:right;">0,00</div>
<div class="cell" style="left:1224px;top:473px;width:96px;">600.20</div>
<div class="cell" style="left:1322px;top:473px;width:95px;text-align:right;">0,00</div>
<div class="cell" style="left:1424px;top:473px;width:96px;">391.20</div>
<div class="cell" style="left:1622px;top:473px;width:95px;text-align:right;">0,00</div>
<div class="cell" style="left:1724px;top:473px;width:96px;">600.18</div>
<div class="a" style="left:3px;top:516px;width:37px;height:1px;background:#a0a0a0"></div>
<div class="cell" style="left:7px;top:495px;width:33px;text-align:center">20</div>
<div class="a" style="left:41px;top:495px;width:1853px;height:21px;background:#fff"></div>
<div class="a" style="left:41px;top:516px;width:1853px;height:1px;background:#a0a0a0"></div>
<div class="cell" style="left:43px;top:495px;width:105px;transform:scaleX(0.91);transform-origin:0 0;">EARSIVFATURA</div>
<div class="cell" style="left:143px;top:495px;width:105px;transform:scaleX(0.91);transform-origin:0 0;">SATIS</div>
<div class="cell" style="left:244px;top:495px;width:99px;color:#0000ff;text-decoration:underline;">TRY2024000000...</div>
<div class="cell" style="left:346px;top:495px;width:96px;">8.04.2024</div>
<div class="cell" style="left:446px;top:495px;width:105px;transform:scaleX(0.91);transform-origin:0 0;">NİDA ÖZDEMİR</div>
<div class="cell" style="left:624px;top:495px;width:105px;transform:scaleX(0.91);transform-origin:0 0;">ONAYLANDI - S...</div>
<div class="cell" style="left:722px;top:495px;width:95px;text-align:right;">2.277,22</div>
<div class="cell" style="left:822px;top:495px;width:95px;text-align:right;">22,78</div>
<div class="cell" style="left:922px;top:495px;width:95px;text-align:right;">2.300,00</div>
<div class="cell" style="left:1122px;top:495px;width:95px;text-align:right;">0,00</div>
<div class="cell" style="left:1224px;top:495px;width:96px;">600.20</div>
<div class="cell" style="left:1322px;top:495px;width:95px;text-align:right;">0,00</div>
<div class="cell" style="left:1424px;top:495px;width:96px;">391.20</div>
<div class="cell" style="left:1622px;top:495px;width:95px;text-align:right;">0,00</div>
<div class="cell" style="left:1724px;top:495px;width:96px;">600.18</div>
<div class="a" style="left:3px;top:538px;width:37px;height:1px;background:#a0a0a0"></div>
<div class="cell" style="left:7px;top:517px;width:33px;text-align:center">21</div>
<div class="a" style="left:41px;top:517px;width:1853px;height:21px;background:#fff"></div>
<div class="a" style="left:41px;top:538px;width:1853px;height:1px;background:#a0a0a0"></div>
<div class="cell" style="left:43px;top:517px;width:105px;transform:scaleX(0.91);transform-origin:0 0;">TEMELFATURA</div>
<div class="cell" style="left:143px;top:517px;width:105px;transform:scaleX(0.91);transform-origin:0 0;">SATIS</div>
<div class="cell" style="left:244px;top:517px;width:99px;color:#0000ff;text-decoration:underline;">TRN2024000000...</div>
<div class="cell" style="left:346px;top:517px;width:96px;">15.04.2024</div>
<div class="cell" style="left:446px;top:517px;width:105px;transform:scaleX(0.91);transform-origin:0 0;">BİGA GÜÇLÜ GI...</div>
<div class="cell" style="left:624px;top:517px;width:105px;transform:scaleX(0.91);transform-origin:0 0;">BEKLEMEDE - SA...</div>
<div class="cell" style="left:722px;top:517px;width:95px;text-align:right;">174.977,90</div>
<div class="cell" style="left:822px;top:517px;width:95px;text-align:right;">1.749,79</div>
<div class="cell" style="left:922px;top:517px;width:95px;text-align:right;">176.727,69</div>
<div class="cell" style="left:1122px;top:517px;width:95px;text-align:right;">0,00</div>
<div class="cell" style="left:1224px;top:517px;width:96px;">600.20</div>
<div class="cell" style="left:1322px;top:517px;width:95px;text-align:right;">0,00</div>
<div class="cell" style="left:1424px;top:517px;width:96px;">391.20</div>
<div class="cell" style="left:1622px;top:517px;width:95px;text-align:right;">0,00</div>
<div class="cell" style="left:1724px;top:517px;width:96px;">600.18</div>
<div class="a" style="left:3px;top:560px;width:37px;height:1px;background:#a0a0a0"></div>
<div class="cell" style="left:7px;top:539px;width:33px;text-align:center">22</div>
<div class="a" style="left:41px;top:539px;width:1853px;height:21px;background:#fff"></div>
<div class="a" style="left:41px;top:560px;width:1853px;height:1px;background:#a0a0a0"></div>
<div class="cell" style="left:43px;top:539px;width:105px;transform:scaleX(0.91);transform-origin:0 0;">TEMELFATURA</div>
<div class="cell" style="left:143px;top:539px;width:105px;transform:scaleX(0.91);transform-origin:0 0;">SATIS</div>
<div class="cell" style="left:244px;top:539px;width:99px;color:#0000ff;text-decoration:underline;">TRN2024000000...</div>
<div class="cell" style="left:346px;top:539px;width:96px;">15.04.2024</div>
<div class="cell" style="left:446px;top:539px;width:105px;transform:scaleX(0.91);transform-origin:0 0;">ERDAL TİCARET...</div>
<div class="cell" style="left:624px;top:539px;width:105px;transform:scaleX(0.91);transform-origin:0 0;">BEKLEMEDE - SA...</div>
<div class="cell" style="left:722px;top:539px;width:95px;text-align:right;">125,99</div>
<div class="cell" style="left:822px;top:539px;width:95px;text-align:right;">3,69</div>
<div class="cell" style="left:922px;top:539px;width:95px;text-align:right;">129,68</div>
<div class="cell" style="left:1122px;top:539px;width:95px;text-align:right;">0,00</div>
<div class="cell" style="left:1224px;top:539px;width:96px;">600.20</div>
<div class="cell" style="left:1322px;top:539px;width:95px;text-align:right;">0,00</div>
<div class="cell" style="left:1424px;top:539px;width:96px;">391.20</div>
<div class="cell" style="left:1622px;top:539px;width:95px;text-align:right;">0,00</div>
<div class="cell" style="left:1724px;top:539px;width:96px;">600.18</div>
<div class="a" style="left:3px;top:582px;width:37px;height:1px;background:#a0a0a0"></div>
<div class="cell" style="left:7px;top:561px;width:33px;text-align:center">23</div>
<div class="a" style="left:41px;top:561px;width:1853px;height:21px;background:#ff4500"></div>
<div class="a" style="left:41px;top:582px;width:1853px;height:1px;background:#a0a0a0"></div>
<div class="cell" style="left:43px;top:561px;width:105px;transform:scaleX(0.91);transform-origin:0 0;">TEMELFATURA</div>
<div class="cell" style="left:143px;top:561px;width:105px;transform:scaleX(0.91);transform-origin:0 0;">IADE</div>
<div class="cell" style="left:244px;top:561px;width:99px;color:#0000ff;text-decoration:underline;">TRN2024000000...</div>
<div class="cell" style="left:346px;top:561px;width:96px;">15.04.2024</div>
<div class="cell" style="left:446px;top:561px;width:105px;transform:scaleX(0.91);transform-origin:0 0;">ECEGIDA PAZAR...</div>
<div class="cell" style="left:624px;top:561px;width:105px;transform:scaleX(0.91);transform-origin:0 0;">BEKLEMEDE - IA...</div>
<div class="cell" style="left:722px;top:561px;width:95px;text-align:right;">209,11</div>
<div class="cell" style="left:822px;top:561px;width:95px;text-align:right;">2,09</div>
<div class="cell" style="left:922px;top:561px;width:95px;text-align:right;">211,20</div>
<div class="cell" style="left:1122px;top:561px;width:95px;text-align:right;">0,00</div>
<div class="cell" style="left:1224px;top:561px;width:96px;">153.20</div>
<div class="cell" style="left:1322px;top:561px;width:95px;text-align:right;">0,00</div>
<div class="cell" style="left:1424px;top:561px;width:96px;">391.20</div>
<div class="cell" style="left:1622px;top:561px;width:95px;text-align:right;">0,00</div>
<div class="cell" style="left:1724px;top:561px;width:96px;">153.18</div>
<div class="a" style="left:3px;top:604px;width:37px;height:1px;background:#a0a0a0"></div>
<div class="cell" style="left:7px;top:583px;width:33px;text-align:center">24</div>
<div class="a" style="left:41px;top:583px;width:1853px;height:21px;background:#fff"></div>
<div class="a" style="left:41px;top:604px;width:1853px;height:1px;background:#a0a0a0"></div>
<div class="cell" style="left:43px;top:583px;width:105px;transform:scaleX(0.91);transform-origin:0 0;">TEMELFATURA</div>
<div class="cell" style="left:143px;top:583px;width:105px;transform:scaleX(0.91);transform-origin:0 0;">SATIS</div>
<div class="cell" style="left:244px;top:583px;width:99px;color:#0000ff;text-decoration:underline;">TRN2024000000...</div>
<div class="cell" style="left:346px;top:583px;width:96px;">15.04.2024</div>
<div class="cell" style="left:446px;top:583px;width:105px;transform:scaleX(0.91);transform-origin:0 0;">ARAS KARGO Y...</div>
<div class="cell" style="left:624px;top:583px;width:105px;transform:scaleX(0.91);transform-origin:0 0;">BEKLEMEDE - SA...</div>
<div class="cell" style="left:722px;top:583px;width:95px;text-align:right;">445,00</div>
<div class="cell" style="left:822px;top:583px;width:95px;text-align:right;">89,00</div>
<div class="cell" style="left:922px;top:583px;width:95px;text-align:right;">534,00</div>
<div class="cell" style="left:1122px;top:583px;width:95px;text-align:right;">445,00</div>
<div class="cell" style="left:1224px;top:583px;width:96px;">600.20</div>
<div class="cell" style="left:1322px;top:583px;width:95px;text-align:right;">89,00</div>
<div class="cell" style="left:1424px;top:583px;width:96px;">391.20</div>
<div class="cell" style="left:1622px;top:583px;width:95px;text-align:right;">0,00</div>
<div class="cell" style="left:1724px;top:583px;width:96px;">600.18</div>
<div class="a" style="left:3px;top:626px;width:37px;height:1px;background:#a0a0a0"></div>
<div class="cell" style="left:7px;top:605px;width:33px;text-align:center">25</div>
<div class="a" style="left:41px;top:605px;width:1853px;height:21px;background:#fff"></div>
<div class="a" style="left:41px;top:626px;width:1853px;height:1px;background:#a0a0a0"></div>
<div class="cell" style="left:43px;top:605px;width:105px;transform:scaleX(0.91);transform-origin:0 0;">EARSIVFATURA</div>
<div class="cell" style="left:143px;top:605px;width:105px;transform:scaleX(0.91);transform-origin:0 0;">SATIS</div>
<div class="cell" style="left:244px;top:605px;width:99px;color:#0000ff;text-decoration:underline;">TRY2024000000...</div>
<div class="cell" style="left:346px;top:605px;width:96px;">15.04.2024</div>
<div class="cell" style="left:446px;top:605px;width:105px;transform:scaleX(0.91);transform-origin:0 0;">ONUR HAYRİ US...</div>
<div class="cell" style="left:624px;top:605px;width:105px;transform:scaleX(0.91);transform-origin:0 0;">ONAYLANDI - S...</div>
<div class="cell" style="left:722px;top:605px;width:95px;text-align:right;">831,40</div>
<div class="cell" style="left:822px;top:605px;width:95px;text-align:right;">8,31</div>
<div class="cell" style="left:922px;top:605px;width:95px;text-align:right;">839,71</div>
<div class="cell" style="left:1122px;top:605px;width:95px;text-align:right;">0,00</div>
<div class="cell" style="left:1224px;top:605px;width:96px;">600.20</div>
<div class="cell" style="left:1322px;top:605px;width:95px;text-align:right;">0,00</div>
<div class="cell" style="left:1424px;top:605px;width:96px;">391.20</div>
<div class="cell" style="left:1622px;top:605px;width:95px;text-align:right;">0,00</div>
<div class="cell" style="left:1724px;top:605px;width:96px;">600.18</div>
<div class="a" style="left:3px;top:648px;width:37px;height:1px;background:#a0a0a0"></div>
<div class="cell" style="left:7px;top:627px;width:33px;text-align:center">26</div>
<div class="a" style="left:41px;top:627px;width:1853px;height:21px;background:#fff"></div>
<div class="a" style="left:41px;top:648px;width:1853px;height:1px;background:#a0a0a0"></div>
<div class="cell" style="left:43px;top:627px;width:105px;transform:scaleX(0.91);transform-origin:0 0;">EARSIVFATURA</div>
<div class="cell" style="left:143px;top:627px;width:105px;transform:scaleX(0.91);transform-origin:0 0;">SATIS</div>
<div class="cell" style="left:244px;top:627px;width:99px;color:#0000ff;text-decoration:underline;">TRY2024000000...</div>
<div class="cell" style="left:346px;top:627px;width:96px;">15.04.2024</div>
<div class="cell" style="left:446px;top:627px;width:105px;transform:scaleX(0.91);transform-origin:0 0;">ONUR HAYRİ US...</div>
<div class="cell" style="left:624px;top:627px;width:105px;transform:scaleX(0.91);transform-origin:0 0;">ONAYLANDI - S...</div>
<div class="cell" style="left:722px;top:627px;width:95px;text-align:right;">703,96</div>
<div class="cell" style="left:822px;top:627px;width:95px;text-align:right;">7,04</div>
<div class="cell" style="left:922px;top:627px;width:95px;text-align:right;">711,00</div>
<div class="cell" style="left:1122px;top:627px;width:95px;text-align:right;">0,00</div>
<div class="cell" style="left:1224px;top:627px;width:96px;">600.20</div>
<div class="cell" style="left:1322px;top:627px;width:95px;text-align:right;">0,00</div>
<div class="cell" style="left:1424px;top:627px;width:96px;">391.20</div>
<div class="cell" style="left:1622px;top:627px;width:95px;text-align:right;">0,00</div>
<div class="cell" style="left:1724px;top:627px;width:96px;">600.18</div>
<div class="a" style="left:3px;top:670px;width:37px;height:1px;background:#a0a0a0"></div>
<div class="cell" style="left:7px;top:649px;width:33px;text-align:center">27</div>
<div class="a" style="left:41px;top:649px;width:1853px;height:21px;background:#fff"></div>
<div class="a" style="left:41px;top:670px;width:1853px;height:1px;background:#a0a0a0"></div>
<div class="cell" style="left:43px;top:649px;width:105px;transform:scaleX(0.91);transform-origin:0 0;">EARSIVFATURA</div>
<div class="cell" style="left:143px;top:649px;width:105px;transform:scaleX(0.91);transform-origin:0 0;">SATIS</div>
<div class="cell" style="left:244px;top:649px;width:99px;color:#0000ff;text-decoration:underline;">TRY2024000000...</div>
<div class="cell" style="left:346px;top:649px;width:96px;">15.04.2024</div>
<div class="cell" style="left:446px;top:649px;width:105px;transform:scaleX(0.91);transform-origin:0 0;">HIZIRELİ SOSYA...</div>
<div class="cell" style="left:624px;top:649px;width:105px;transform:scaleX(0.91);transform-origin:0 0;">ONAYLANDI - S...</div>
<div class="cell" style="left:722px;top:649px;width:95px;text-align:right;">79.208,30</div>
<div class="cell" style="left:822px;top:649px;width:95px;text-align:right;">792,08</div>
<div class="cell" style="left:922px;top:649px;width:95px;text-align:right;">80.000,38</div>
<div class="cell" style="left:1122px;top:649px;width:95px;text-align:right;">0,00</div>
<div class="cell" style="left:1224px;top:649px;width:96px;">600.20</div>
<div class="cell" style="left:1322px;top:649px;width:95px;text-align:right;">0,00</div>
<div class="cell" style="left:1424px;top:649px;width:96px;">391.20</div>
<div class="cell" style="left:1622px;top:649px;width:95px;text-align:right;">0,00</div>
<div class="cell" style="left:1724px;top:649px;width:96px;">600.18</div>
<div class="a" style="left:3px;top:692px;width:37px;height:1px;background:#a0a0a0"></div>
<div class="cell" style="left:7px;top:671px;width:33px;text-align:center">28</div>
<div class="a" style="left:41px;top:671px;width:1853px;height:21px;background:#fff"></div>
<div class="a" style="left:41px;top:692px;width:1853px;height:1px;background:#a0a0a0"></div>
<div class="cell" style="left:43px;top:671px;width:105px;transform:scaleX(0.91);transform-origin:0 0;">TICARIFATURA</div>
<div class="cell" style="left:143px;top:671px;width:105px;transform:scaleX(0.91);transform-origin:0 0;">SATIS</div>
<div class="cell" style="left:244px;top:671px;width:99px;color:#0000ff;text-decoration:underline;">TRN2024000000...</div>
<div class="cell" style="left:346px;top:671px;width:96px;">16.04.2024</div>
<div class="cell" style="left:446px;top:671px;width:105px;transform:scaleX(0.91);transform-origin:0 0;">ALTINORDU MA...</div>
<div class="cell" style="left:624px;top:671px;width:105px;transform:scaleX(0.91);transform-origin:0 0;">ONAYLANDI - S...</div>
<div class="cell" style="left:722px;top:671px;width:95px;text-align:right;">52.584,47</div>
<div class="cell" style="left:822px;top:671px;width:95px;text-align:right;">652,21</div>
<div class="cell" style="left:922px;top:671px;width:95px;text-align:right;">53.236,68</div>
<div class="cell" style="left:1122px;top:671px;width:95px;text-align:right;">0,00</div>
<div class="cell" style="left:1224px;top:671px;width:96px;">600.20</div>
<div class="cell" style="left:1322px;top:671px;width:95px;text-align:right;">0,00</div>
<div class="cell" style="left:1424px;top:671px;width:96px;">391.20</div>
<div class="cell" style="left:1622px;top:671px;width:95px;text-align:right;">0,00</div>
<div class="cell" style="left:1724px;top:671px;width:96px;">600.18</div>
<div class="a" style="left:3px;top:714px;width:37px;height:1px;background:#a0a0a0"></div>
<div class="cell" style="left:7px;top:693px;width:33px;text-align:center">29</div>
<div class="a" style="left:41px;top:693px;width:1853px;height:21px;background:#ff4500"></div>
<div class="a" style="left:41px;top:714px;width:1853px;height:1px;background:#a0a0a0"></div>
<div class="cell" style="left:43px;top:693px;width:105px;transform:scaleX(0.91);transform-origin:0 0;">TEMELFATURA</div>
<div class="cell" style="left:143px;top:693px;width:105px;transform:scaleX(0.91);transform-origin:0 0;">IADE</div>
<div class="cell" style="left:244px;top:693px;width:99px;color:#0000ff;text-decoration:underline;">TRN2024000000...</div>
<div class="cell" style="left:346px;top:693px;width:96px;">16.04.2024</div>
<div class="cell" style="left:446px;top:693px;width:105px;transform:scaleX(0.91);transform-origin:0 0;">EKER SÜT ÜRÜN...</div>
<div class="cell" style="left:624px;top:693px;width:105px;transform:scaleX(0.91);transform-origin:0 0;">BEKLEMEDE - IA...</div>
<div class="cell" style="left:722px;top:693px;width:95px;text-align:right;">1.701,42</div>
<div class="cell" style="left:822px;top:693px;width:95px;text-align:right;">17,00</div>
<div class="cell" style="left:922px;top:693px;width:95px;text-align:right;">1.718,42</div>
<div class="cell" style="left:1122px;top:693px;width:95px;text-align:right;">0,00</div>
<div class="cell" style="left:1224px;top:693px;width:96px;">153.20</div>
<div class="cell" style="left:1322px;top:693px;width:95px;text-align:right;">0,00</div>
<div class="cell" style="left:1424px;top:693px;width:96px;">391.20</div>
<div class="cell" style="left:1622px;top:693px;width:95px;text-align:right;">0,00</div>
<div class="cell" style="left:1724px;top:693px;width:96px;">153.18</div>
<div class="a" style="left:3px;top:736px;width:37px;height:1px;background:#a0a0a0"></div>
<div class="cell" style="left:7px;top:715px;width:33px;text-align:center">30</div>
<div class="a" style="left:41px;top:715px;width:1853px;height:21px;background:#fff"></div>
<div class="a" style="left:41px;top:736px;width:1853px;height:1px;background:#a0a0a0"></div>
<div class="cell" style="left:43px;top:715px;width:105px;transform:scaleX(0.91);transform-origin:0 0;">TEMELFATURA</div>
<div class="cell" style="left:143px;top:715px;width:105px;transform:scaleX(0.91);transform-origin:0 0;">SATIS</div>
<div class="cell" style="left:244px;top:715px;width:99px;color:#0000ff;text-decoration:underline;">TRN2024000000...</div>
<div class="cell" style="left:346px;top:715px;width:96px;">16.04.2024</div>
<div class="cell" style="left:446px;top:715px;width:105px;transform:scaleX(0.91);transform-origin:0 0;">KALE GIDA SAN...</div>
<div class="cell" style="left:624px;top:715px;width:105px;transform:scaleX(0.91);transform-origin:0 0;">BEKLEMEDE - SA...</div>
<div class="cell" style="left:722px;top:715px;width:95px;text-align:right;">12.425,13</div>
<div class="cell" style="left:822px;top:715px;width:95px;text-align:right;">2.485,03</div>
<div class="cell" style="left:922px;top:715px;width:95px;text-align:right;">14.910,16</div>
<div class="cell" style="left:1122px;top:715px;width:95px;text-align:right;">12.425,13</div>
<div class="cell" style="left:1224px;top:715px;width:96px;">600.20</div>
<div class="cell" style="left:1322px;top:715px;width:95px;text-align:right;">2.485,03</div>
<div class="cell" style="left:1424px;top:715px;width:96px;">391.20</div>
<div class="cell" style="left:1622px;top:715px;width:95px;text-align:right;">0,00</div>
<div class="cell" style="left:1724px;top:715px;width:96px;">600.18</div>
<div class="a" style="left:3px;top:758px;width:37px;height:1px;background:#a0a0a0"></div>
<div class="cell" style="left:7px;top:737px;width:33px;text-align:center">31</div>
<div class="a" style="left:41px;top:737px;width:1853px;height:21px;background:#fff"></div>
<div class="a" style="left:41px;top:758px;width:1853px;height:1px;background:#a0a0a0"></div>
<div class="cell" style="left:43px;top:737px;width:105px;transform:scaleX(0.91);transform-origin:0 0;">TEMELFATURA</div>
<div class="cell" style="left:143px;top:737px;width:105px;transform:scaleX(0.91);transform-origin:0 0;">SATIS</div>
<div class="cell" style="left:244px;top:737px;width:99px;color:#0000ff;text-decoration:underline;">TRN2024000000...</div>
<div class="cell" style="left:346px;top:737px;width:96px;">16.04.2024</div>
<div class="cell" style="left:446px;top:737px;width:105px;transform:scaleX(0.91);transform-origin:0 0;">SERTELLİ İNŞAA...</div>
<div class="cell" style="left:624px;top:737px;width:105px;transform:scaleX(0.91);transform-origin:0 0;">BEKLEMEDE - SA...</div>
<div class="cell" style="left:722px;top:737px;width:95px;text-align:right;">1.089,11</div>
<div class="cell" style="left:822px;top:737px;width:95px;text-align:right;">10,89</div>
<div class="cell" style="left:922px;top:737px;width:95px;text-align:right;">1.100,00</div>
<div class="cell" style="left:1122px;top:737px;width:95px;text-align:right;">0,00</div>
<div class="cell" style="left:1224px;top:737px;width:96px;">600.20</div>
<div class="cell" style="left:1322px;top:737px;width:95px;text-align:right;">0,00</div>
<div class="cell" style="left:1424px;top:737px;width:96px;">391.20</div>
<div class="cell" style="left:1622px;top:737px;width:95px;text-align:right;">0,00</div>
<div class="cell" style="left:1724px;top:737px;width:96px;">600.18</div>
<div class="a" style="left:3px;top:780px;width:37px;height:1px;background:#a0a0a0"></div>
<div class="cell" style="left:7px;top:759px;width:33px;text-align:center">32</div>
<div class="a" style="left:41px;top:759px;width:1853px;height:21px;background:#fff"></div>
<div class="a" style="left:41px;top:780px;width:1853px;height:1px;background:#a0a0a0"></div>
<div class="cell" style="left:43px;top:759px;width:105px;transform:scaleX(0.91);transform-origin:0 0;">TEMELFATURA</div>
<div class="cell" style="left:143px;top:759px;width:105px;transform:scaleX(0.91);transform-origin:0 0;">SATIS</div>
<div class="cell" style="left:244px;top:759px;width:99px;color:#0000ff;text-decoration:underline;">TRN2024000000...</div>
<div class="cell" style="left:346px;top:759px;width:96px;">16.04.2024</div>
<div class="cell" style="left:446px;top:759px;width:105px;transform:scaleX(0.91);transform-origin:0 0;">EMİNE OCLAN...</div>
<div class="cell" style="left:624px;top:759px;width:105px;transform:scaleX(0.91);transform-origin:0 0;">BEKLEMEDE - SA...</div>
<div class="cell" style="left:722px;top:759px;width:95px;text-align:right;">2.713,87</div>
<div class="cell" style="left:822px;top:759px;width:95px;text-align:right;">27,13</div>
<div class="cell" style="left:922px;top:759px;width:95px;text-align:right;">2.741,00</div>
<div class="cell" style="left:1122px;top:759px;width:95px;text-align:right;">0,00</div>
<div class="cell" style="left:1224px;top:759px;width:96px;">600.20</div>
<div class="cell" style="left:1322px;top:759px;width:95px;text-align:right;">0,00</div>
<div class="cell" style="left:1424px;top:759px;width:96px;">391.20</div>
<div class="cell" style="left:1622px;top:759px;width:95px;text-align:right;">0,00</div>
<div class="cell" style="left:1724px;top:759px;width:96px;">600.18</div>
<div class="a" style="left:40px;top:76px;width:1px;height:691px;background:#a0a0a0"></div>
<div class="a" style="left:140px;top:76px;width:1px;height:691px;background:#a0a0a0"></div>
<div class="a" style="left:240px;top:76px;width:1px;height:691px;background:#a0a0a0"></div>
<div class="a" style="left:343px;top:76px;width:1px;height:691px;background:#a0a0a0"></div>
<div class="a" style="left:443px;top:76px;width:1px;height:691px;background:#a0a0a0"></div>
<div class="a" style="left:543px;top:76px;width:1px;height:691px;background:#a0a0a0"></div>
<div class="a" style="left:621px;top:76px;width:1px;height:691px;background:#a0a0a0"></div>
<div class="a" style="left:721px;top:76px;width:1px;height:691px;background:#a0a0a0"></div>
<div class="a" style="left:821px;top:76px;width:1px;height:691px;background:#a0a0a0"></div>
<div class="a" style="left:921px;top:76px;width:1px;height:691px;background:#a0a0a0"></div>
<div class="a" style="left:1021px;top:76px;width:1px;height:691px;background:#a0a0a0"></div>
<div class="a" style="left:1121px;top:76px;width:1px;height:691px;background:#a0a0a0"></div>
<div class="a" style="left:1221px;top:76px;width:1px;height:691px;background:#a0a0a0"></div>
<div class="a" style="left:1321px;top:76px;width:1px;height:691px;background:#a0a0a0"></div>
<div class="a" style="left:1421px;top:76px;width:1px;height:691px;background:#a0a0a0"></div>
<div class="a" style="left:1521px;top:76px;width:1px;height:691px;background:#a0a0a0"></div>
<div class="a" style="left:1621px;top:76px;width:1px;height:691px;background:#a0a0a0"></div>
<div class="a" style="left:1721px;top:76px;width:1px;height:691px;background:#a0a0a0"></div>
<div class="a" style="left:1821px;top:76px;width:1px;height:691px;background:#a0a0a0"></div>
</div>
<div class="a" style="left:1899px;top:184px;width:16px;height:784px;background:#f0f0f0"></div>
<svg class="a" style="left:1902px;top:188px" width="10" height="8"><path d="M1 6.5L5 2.5L9 6.5" fill="none" stroke="#606060" stroke-width="1.8"/></svg>
<div class="a" style="left:1900px;top:201px;width:15px;height:306px;background:#cdcdcd"></div>
<svg class="a" style="left:1902px;top:939px" width="10" height="8"><path d="M1 1.5L5 5.5L9 1.5" fill="none" stroke="#606060" stroke-width="1.8"/></svg>
<div class="a" style="left:5px;top:951px;width:1894px;height:17px;background:#f0f0f0"></div>
<svg class="a" style="left:9px;top:955px" width="8" height="10"><path d="M6.5 1L2.5 5L6.5 9" fill="none" stroke="#606060" stroke-width="1.8"/></svg>
<div class="a" style="left:22px;top:953px;width:735px;height:15px;background:#cdcdcd"></div>
<svg class="a" style="left:1886px;top:955px" width="8" height="10"><path d="M1.5 1L5.5 5L1.5 9" fill="none" stroke="#606060" stroke-width="1.8"/></svg>
<div class="a" style="left:548px;top:183px;width:79px;height:770px;border:3px solid #0db03a"></div>
<div class="a" style="left:650px;top:468px;width:618px;height:145px;border:3px solid #0db03a;background:#f0f0f0;box-shadow:2px 3px 15px 1px rgba(0,0,0,0.3)"></div>
<div class="a" style="left:653px;top:471px;width:612px;height:27px;background:#fff"></div>
<div class="ico" style="left:661px;top:474px;background:#c8106a">F</div>
<div class="t" style="left:682px;top:477px;transform:scaleX(0.932);transform-origin:0 0;">Hesap Planı Seçin</div>
<svg class="a" style="left:1140px;top:471px" width="120" height="27" viewBox="1140 471 120 27"><line x1="1147" y1="482.5" x2="1157" y2="482.5" stroke="#000"/><rect x="1192.5" y="477.5" width="9" height="9" fill="none" stroke="#000"/><path d="M1238 477L1248 487M1248 477L1238 487" stroke="#000" stroke-width="1"/></svg>
<div class="a" style="left:665px;top:530px;width:493px;height:21px;border:1px solid #0078d7;background:#ffd700;box-shadow:inset 0 0 0 1px #fff"></div>
<div class="t" style="left:668px;top:535px;">C:\HesapPlan\logo-hp.XML</div>
<div class="a" style="left:1165px;top:528px;width:85px;height:23px;border:2px solid #0078d7;background:#0000ff;box-shadow:inset 0 0 0 1px #fff"></div>
<div class="t" style="left:1188px;top:535px;color:#fff;transform:scaleX(0.857);transform-origin:0 0;">Gözat...</div>
<div class="a" style="left:1016px;top:581px;width:123px;height:21px;border:3px solid #ffff00;background:#008000"></div>
<div class="t" style="left:1046px;top:586px;font-weight:bold;color:#fff;transform:scaleX(0.973);transform-origin:0 0;">Tamam - F2</div>
<div class="a" style="left:1147px;top:581px;width:115px;height:21px;border:1px solid #adadad;background:#cd5c5c;box-shadow:inset 0 0 0 2px #e1e1e1"></div>
<div class="t" style="left:1166px;top:586px;font-weight:bold;color:#fff;transform:scaleX(1.018);transform-origin:0 0;">Vazgeç - Esc</div>
<div class="a" style="left:0;top:991px;width:1500px;height:1px;background:#d8d8d8"></div>
<div class="a" style="left:2px;top:994px;width:90px;height:18px;border-left:1px solid #a0a0a0;border-top:1px solid #a0a0a0;border-right:1px solid #fff;border-bottom:1px solid #fff"></div>
<div class="t" style="left:7px;top:998px;transform:scaleX(0.909);transform-origin:0 0;">Fatura Sayısı:74</div>
<div class="a" style="left:93px;top:994px;width:73px;height:19px;background:#008000;border-left:1px solid #3a6a3a;border-top:1px solid #3a6a3a;border-right:2px solid #1f9f1f;border-bottom:2px solid #1f9f1f"></div>
<div class="t" style="left:101px;top:998px;color:#f0fff0;transform:scaleX(0.925);transform-origin:0 0;">Bakiye:0,00</div>
<div class="a" style="left:166px;top:994px;width:172px;height:18px;border-left:1px solid #a0a0a0;border-top:1px solid #a0a0a0;border-right:1px solid #fff;border-bottom:1px solid #fff"></div>
<div class="t" style="left:173px;top:998px;transform:scaleX(0.951);transform-origin:0 0;">Kdv Hariç Toplam:1.276.191,50</div>
<div class="a" style="left:338px;top:994px;width:127px;height:18px;border-left:1px solid #a0a0a0;border-top:1px solid #a0a0a0;border-right:1px solid #fff;border-bottom:1px solid #fff"></div>
<div class="t" style="left:347px;top:998px;transform:scaleX(0.938);transform-origin:0 0;">Toplam Kdv:57.915,47</div>
<div class="a" style="left:465px;top:994px;width:108px;height:18px;border-left:1px solid #a0a0a0;border-top:1px solid #a0a0a0;border-right:1px solid #fff;border-bottom:1px solid #fff"></div>
<div class="t" style="left:473px;top:998px;transform:scaleX(0.936);transform-origin:0 0;">Diğer Vergiler:0,00</div>
<div class="a" style="left:573px;top:994px;width:152px;height:18px;border-left:1px solid #a0a0a0;border-top:1px solid #a0a0a0;border-right:1px solid #fff;border-bottom:1px solid #fff"></div>
<div class="t" style="left:582px;top:998px;transform:scaleX(0.930);transform-origin:0 0;">Genel Toplam:1.334.106,97</div>
<div class="a" style="left:726px;top:994px;width:5px;height:18px;border-left:1px solid #a0a0a0;border-right:1px solid #a0a0a0"></div>
<div class="a" style="left:1664px;top:985px;width:128px;height:21px;border:1px solid #adadad;background:#008000;box-shadow:inset 0 0 0 2px #e1e1e1"></div>
<div class="t" style="left:1671px;top:990px;font-weight:bold;color:#fff;transform:scaleX(1.033);transform-origin:0 0;">DIŞARI AKTAR - F2</div>
<div class="a" style="left:1800px;top:985px;width:115px;height:21px;border:1px solid #adadad;background:#cd5c5c;box-shadow:inset 0 0 0 2px #e1e1e1"></div>
<div class="t" style="left:1814px;top:990px;font-weight:bold;color:#fff;">VAZGEÇ - ESC</div>
<div class="a" style="left:2px;top:1019px;width:46px;height:18px;border-left:1px solid #a0a0a0;border-top:1px solid #a0a0a0;border-right:1px solid #fff;border-bottom:1px solid #fff"></div>
<div class="t" style="left:7px;top:1023px;transform:scaleX(0.843);transform-origin:0 0;">DEBUG</div>
<div class="a" style="left:49px;top:1019px;width:96px;height:18px;border-left:1px solid #a0a0a0;border-top:1px solid #a0a0a0;border-right:1px solid #fff;border-bottom:1px solid #fff"></div>
<div class="t" style="left:54px;top:1023px;transform:scaleX(0.917);transform-origin:0 0;">Versiyon : 5.1.0.0</div>
</body></html>
